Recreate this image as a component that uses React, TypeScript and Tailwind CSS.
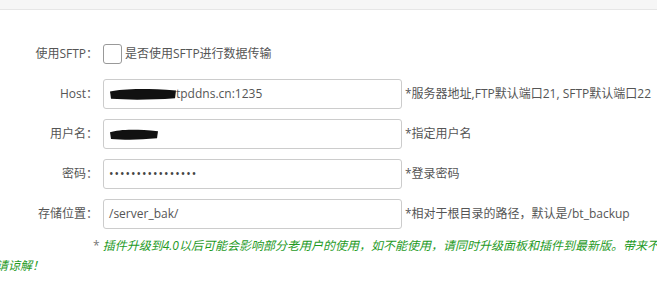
import React from 'react';

const font = { fontFamily: '"Open Sans", "Noto Sans CJK SC", sans-serif' };

// 涂抹遮挡（截图里被人工涂黑的部分）
function Scribble({ w, h }: { w: number; h: number }) {
  return (
    <svg width={w} height={h} viewBox={`0 0 ${w} ${h}`} className="shrink-0">
      <path
        d={`M1 ${h * 0.3} C ${w * 0.2} ${h * 0.05}, ${w * 0.5} 0, ${w - 1} ${h * 0.2} L ${w - 2} ${h * 0.85} C ${w * 0.6} ${h}, ${w * 0.3} ${h}, 2 ${h * 0.9} Z`}
        fill="#111"
      />
    </svg>
  );
}

function Row({
  label,
  hint,
  children,
}: {
  label: string;
  hint?: string;
  children: React.ReactNode;
}) {
  return (
    <div className="flex h-[30px] items-center">
      <div className="w-[98px] shrink-0 text-right text-[12px] text-[#555]">{label}</div>
      <div className="ml-[5px] flex h-[30px] w-[299px] shrink-0 items-center rounded-[3px] border border-[#ccc] px-[5px] text-[12px] text-[#555]">
        {children}
      </div>
      {hint && <div className="ml-[3px] whitespace-nowrap text-[12px] text-[#555]">{hint}</div>}
    </div>
  );
}

export default function App() {
  return (
    <div className="h-[285px] w-full overflow-hidden bg-white" style={font}>
      <div className="h-[10px] border-b border-[#e6e6e6] bg-[#f6f6f6]" />

      <div className="pt-[29px]">
        <div className="mb-[10px] flex h-[30px] items-center">
          <div className="w-[98px] shrink-0 text-right text-[12px] text-[#555]">使用SFTP：</div>
          <div className="ml-[5px] h-[20px] w-[19px] shrink-0 rounded-[3px] border border-[#999]" />
          <div className="ml-[3px] text-[12px] text-[#555]">是否使用SFTP进行数据传输</div>
        </div>

        <div className="flex flex-col gap-[10px]">
          <Row label="Host：" hint="*服务器地址,FTP默认端口21, SFTP默认端口22">
            <Scribble w={68} h={12} />
            <span className="-ml-[1px]">tpddns.cn:1235</span>
          </Row>
          <Row label="用户名：" hint="*指定用户名">
            <Scribble w={50} h={11} />
          </Row>
          <Row label="密码：" hint="*登录密码">
            <span className="tracking-[1px] text-[#444]">••••••••••••••••</span>
          </Row>
          <Row label="存储位置：" hint="*相对于根目录的路径，默认是/bt_backup">
            <span>/server_bak/</span>
          </Row>
        </div>

        <p className="ml-[-4px] mt-[7px] w-[700px] indent-[97px] text-[12px] leading-[20px]">
          <span className="text-[#777]">* </span>
          <span className="italic text-[#1f9a1f]">
            插件升级到4.0以后可能会影响部分老用户的使用，如不能使用，请同时升级面板和插件到最新版。带来不便，敬请谅解！
          </span>
        </p>
      </div>
    </div>
  );
}
